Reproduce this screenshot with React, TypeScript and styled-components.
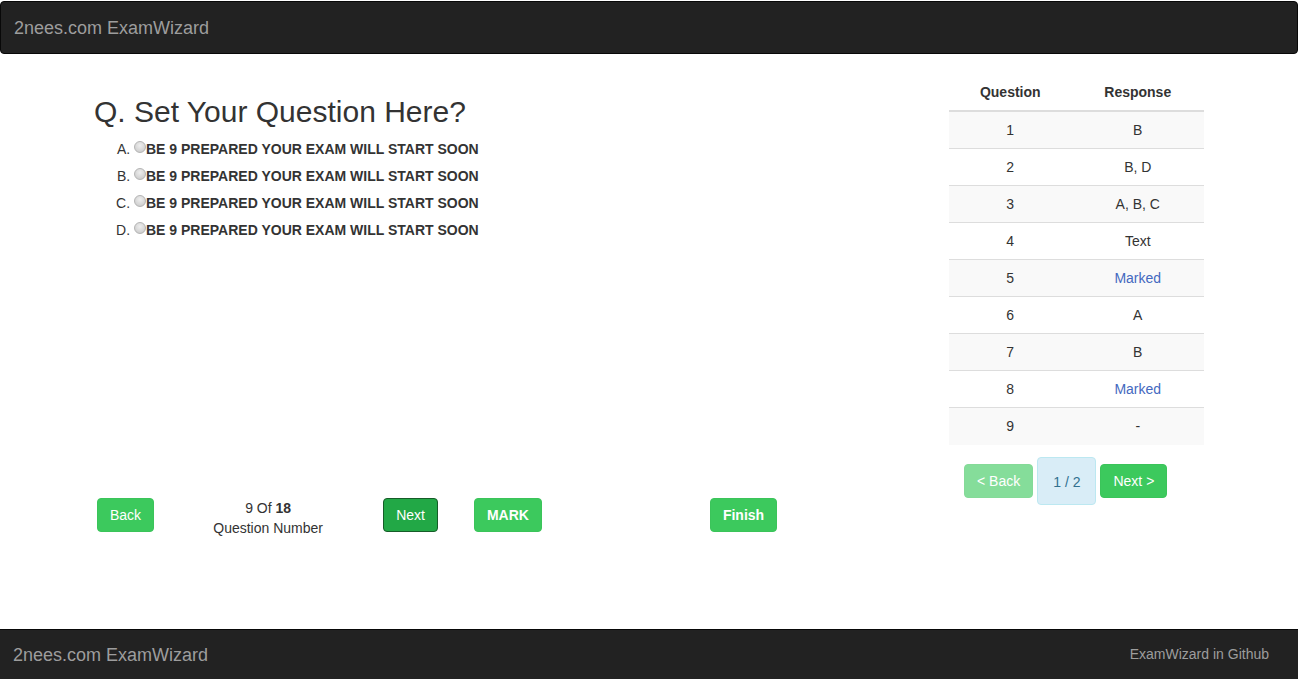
import React from 'react'
import styled, { createGlobalStyle, css } from 'styled-components'

const GlobalStyle = createGlobalStyle`
  * { box-sizing: border-box; }
  html, body { margin: 0; padding: 0; background: #fff; }
  body {
    font-family: "Liberation Sans", Arial, Helvetica, sans-serif;
    font-size: 14px;
    line-height: 1.42857;
    color: #333;
  }
`

const Page = styled.div`
  min-height: 679px;
  display: flex;
  flex-direction: column;
`

const TopBar = styled.header`
  margin-top: 1px;
  height: 53px;
  background: #222;
  border: 1px solid #080808;
  border-radius: 4px;
  display: flex;
  align-items: center;
`

const Brand = styled.span`
  padding: 0 13px;
  font-size: 18px;
  line-height: 20px;
  color: #9d9d9d;
`

const Main = styled.main`
  flex: 1;
  display: flex;
  padding: 0 94px;
`

const QuestionColumn = styled.section`
  flex: 1;
  padding-top: 41px;
`

const Heading = styled.h2`
  margin: 0 0 8px;
  font-size: 30px;
  font-weight: 400;
  line-height: 33px;
  color: #333;
`

const Options = styled.ol`
  margin: 0;
  padding-left: 40px;
  list-style: upper-alpha;
`

const Option = styled.li`
  line-height: 27px;
  color: #333;
`

const Radio = styled.input`
  appearance: none;
  width: 12px;
  height: 12px;
  margin: 0;
  border-radius: 50%;
  border: 1px solid #b4b4b4;
  background: radial-gradient(circle at 50% 35%, #eee 0%, #d6d6d6 60%, #c4c4c4 100%);
  vertical-align: 1px;
`

const OptionLabel = styled.label`
  font-weight: 700;
`

const NavRow = styled.div`
  margin-top: 254px;
  display: flex;
  align-items: flex-start;
`

const Button = styled.button<{ $active?: boolean; $bold?: boolean; $faded?: boolean; $gap?: number }>`
  height: 34px;
  padding: 6px 12px;
  margin-left: ${(p) => p.$gap ?? 0}px;
  font-family: inherit;
  font-size: 14px;
  line-height: 20px;
  font-weight: ${(p) => (p.$bold ? 700 : 400)};
  color: #fff;
  background: #3cc95d;
  border: 1px solid #3bc45a;
  border-radius: 4px;
  white-space: nowrap;
  ${(p) =>
    p.$active &&
    css`
      background: #22a846;
      border-color: #165c28;
    `}
  ${(p) =>
    p.$faded &&
    css`
      opacity: 0.62;
    `}
`

const Counter = styled.div`
  width: 130px;
  margin-left: 49px;
  text-align: center;
  line-height: 20px;
  color: #333;
`

const SideColumn = styled.aside`
  width: 255px;
  padding-top: 20px;
`

const Table = styled.table`
  width: 100%;
  border-collapse: collapse;
  border-spacing: 0;
`

const HeadCell = styled.th`
  padding: 8px;
  line-height: 20px;
  text-align: center;
  font-weight: 700;
  border-bottom: 2px solid #ddd;
`

const Row = styled.tr`
  &:nth-child(odd) {
    background: #f9f9f9;
  }
  & + & td {
    border-top: 1px solid #ddd;
  }
`

const Cell = styled.td<{ $marked?: boolean }>`
  height: 37px;
  padding: 8px;
  line-height: 20px;
  text-align: center;
  color: ${(p) => (p.$marked ? '#4469c0' : '#333')};
`

const Pager = styled.div`
  margin-top: 12px;
  padding-left: 15px;
  display: flex;
  align-items: center;
  gap: 4px;
`

const PageInfo = styled.div`
  height: 48px;
  padding: 14px 15px;
  line-height: 20px;
  color: #31708f;
  background: #d9edf7;
  border: 1px solid #bce8f1;
  border-radius: 4px;
`

const Footer = styled.footer`
  height: 50px;
  background: #222;
  border-top: 1px solid #080808;
  display: flex;
  align-items: center;
  justify-content: space-between;
`

const FooterLink = styled.a`
  padding-right: 29px;
  font-size: 14px;
  color: #9d9d9d;
  text-decoration: none;
`

const responses = [
  { q: 1, r: 'B' },
  { q: 2, r: 'B, D' },
  { q: 3, r: 'A, B, C' },
  { q: 4, r: 'Text' },
  { q: 5, r: 'Marked', marked: true },
  { q: 6, r: 'A' },
  { q: 7, r: 'B' },
  { q: 8, r: 'Marked', marked: true },
  { q: 9, r: '-' },
]

const optionText = 'BE 9 PREPARED YOUR EXAM WILL START SOON'

export default function App() {
  return (
    <Page>
      <GlobalStyle />
      <TopBar>
        <Brand>2nees.com ExamWizard</Brand>
      </TopBar>

      <Main>
        <QuestionColumn>
          <Heading>Q. Set Your Question Here?</Heading>
          <Options>
            {['a', 'b', 'c', 'd'].map((key) => (
              <Option key={key}>
                <Radio type="radio" name="answer" id={`opt-${key}`} />
                <OptionLabel htmlFor={`opt-${key}`}>{optionText}</OptionLabel>
              </Option>
            ))}
          </Options>

          <NavRow>
            <Button $gap={3}>Back</Button>
            <Counter>
              9 Of <b>18</b>
              <br />
              Question Number
            </Counter>
            <Button $active $gap={50}>
              Next
            </Button>
            <Button $bold $gap={36}>
              MARK
            </Button>
            <Button $bold $gap={168}>
              Finish
            </Button>
          </NavRow>
        </QuestionColumn>

        <SideColumn>
          <Table>
            <thead>
              <tr>
                <HeadCell>Question</HeadCell>
                <HeadCell>Response</HeadCell>
              </tr>
            </thead>
            <tbody>
              {responses.map((item) => (
                <Row key={item.q}>
                  <Cell>{item.q}</Cell>
                  <Cell $marked={item.marked}>{item.r}</Cell>
                </Row>
              ))}
            </tbody>
          </Table>
          <Pager>
            <Button $faded>&lt; Back</Button>
            <PageInfo>1 / 2</PageInfo>
            <Button>Next &gt;</Button>
          </Pager>
        </SideColumn>
      </Main>

      <Footer>
        <Brand>2nees.com ExamWizard</Brand>
        <FooterLink href="#">ExamWizard in Github</FooterLink>
      </Footer>
    </Page>
  )
}
